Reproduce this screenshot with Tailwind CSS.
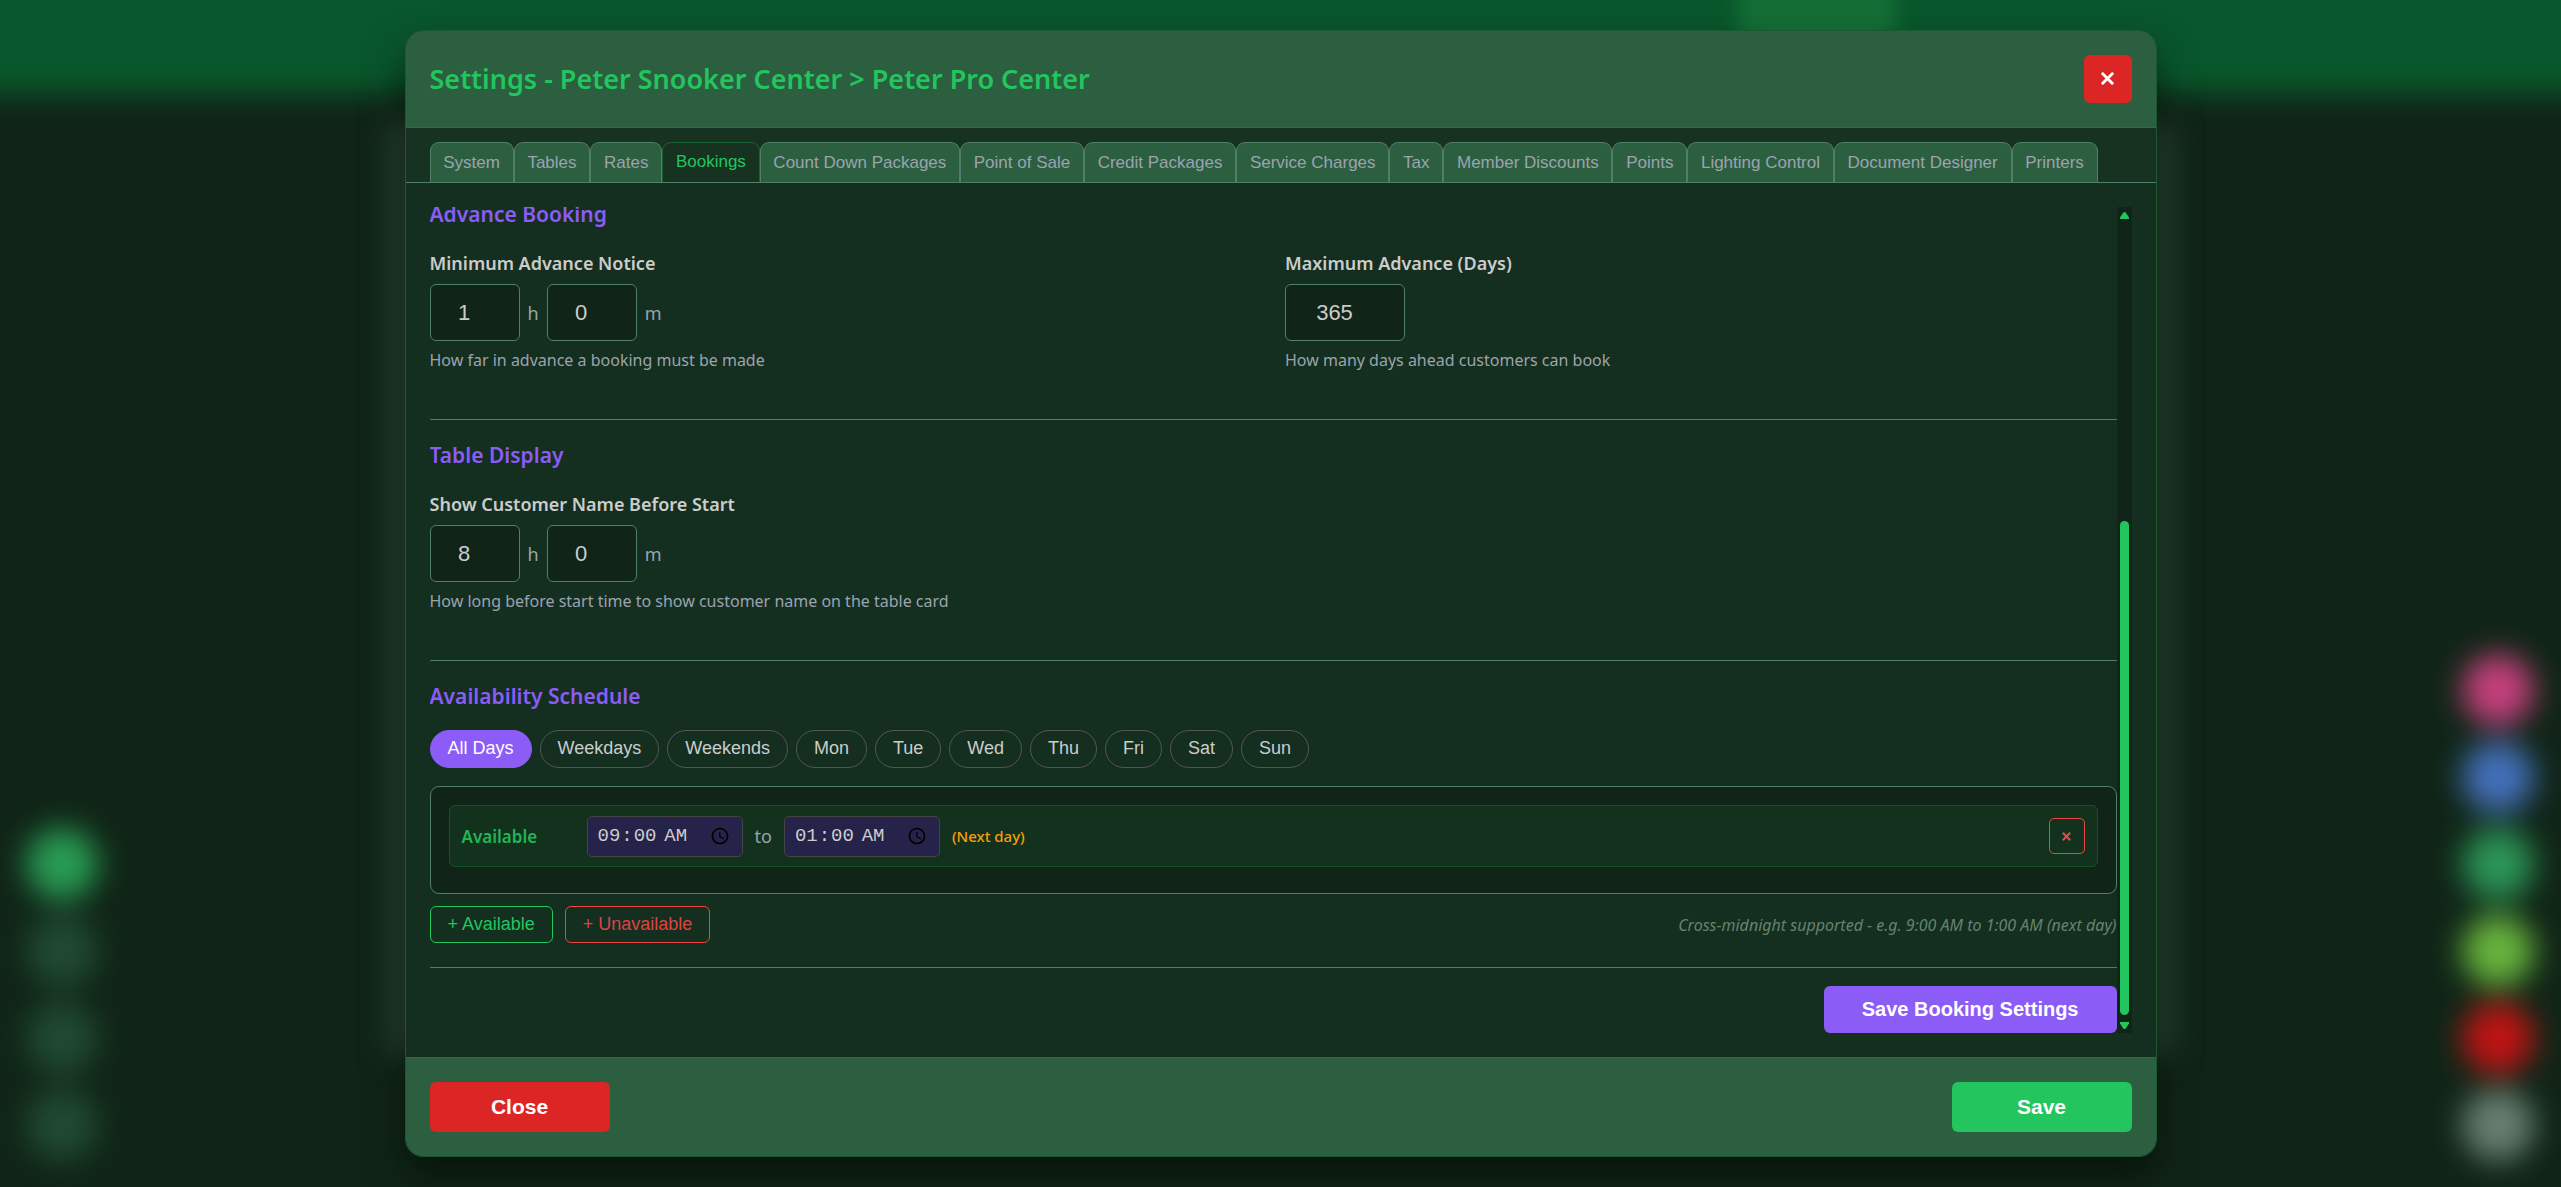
<!DOCTYPE html>
<html lang="en">
<head>
	<meta charset="UTF-8" />
	<meta name="viewport" content="width=device-width, initial-scale=1.0" />
	<title>Settings - Peter Snooker Center</title>
	<script src="https://cdn.jsdelivr.net/npm/@tailwindcss/browser@4"></script>
</head>
<body class="relative h-screen overflow-hidden bg-[#102517] font-['Segoe_UI','Noto_Sans',sans-serif] text-[#cccccc]">

	<!-- Blurred page behind the dialog -->
	<div class="absolute inset-0 overflow-hidden" aria-hidden="true">
		<div class="absolute -top-10 -inset-x-10 h-[134px] bg-[#09572c] blur-[14px]"></div>
		<div class="absolute top-[120px] bottom-[130px] inset-x-[388px] bg-[#244231] blur-[14px]"></div>
		<div class="absolute -top-8 left-[1738px] w-[158px] h-[120px] bg-[#146f36] blur-[10px]"></div>
		<div class="absolute left-[26px] bottom-[26px] flex flex-col gap-[15px] blur-[15px]">
			<div class="size-[72px] rounded-full bg-[#289c55]"></div>
			<div class="size-[72px] rounded-full bg-[#204a32]"></div>
			<div class="size-[72px] rounded-full bg-[#204a32]"></div>
			<div class="size-[72px] rounded-full bg-[#204a32]"></div>
		</div>
		<div class="absolute right-[27px] bottom-[26px] flex flex-col gap-[15px] blur-[15px]">
			<div class="size-[72px] rounded-full bg-[#c4407c]"></div>
			<div class="size-[72px] rounded-full bg-[#4470ba]"></div>
			<div class="size-[72px] rounded-full bg-[#2c9557]"></div>
			<div class="size-[72px] rounded-full bg-[#68b43e]"></div>
			<div class="size-[72px] rounded-full bg-[#bf1414]"></div>
			<div class="size-[72px] rounded-full bg-[#677f72]"></div>
		</div>
	</div>

	<div class="relative h-full flex items-center justify-center">
		<div role="dialog" aria-labelledby="dialogTitle" class="w-full max-w-[1752px] h-[95vh] flex flex-col rounded-[18px] overflow-hidden border border-[#1a5a33] bg-[#142f1f] shadow-[0_20px_40px_rgba(0,0,0,0.5)]">

			<header class="shrink-0 flex items-center justify-between p-6 bg-[#2c5f40] border-b border-[#2a6f47]">
				<h1 id="dialogTitle" class="text-[27px] leading-9 font-semibold text-[#22c55e]">Settings - Peter Snooker Center &gt; Peter Pro Center</h1>
				<button type="button" aria-label="Close dialog" class="size-12 flex items-center justify-center rounded-md bg-[#dc2626] text-white">
					<svg class="size-[13px]" viewBox="0 0 12 12" fill="none" stroke="currentColor" stroke-width="2.6"><path d="M0.8 0.8 11.2 11.2M11.2 0.8 0.8 11.2" /></svg>
				</button>
			</header>

			<nav class="shrink-0 px-6 pt-[14px] bg-[#183222] border-b border-[#4f8065]">
				<div class="max-w-[1668px] flex font-['Liberation_Sans',sans-serif] text-[17px] leading-6 text-[#9ca3af]">
					<button type="button" class="grow px-3 pt-2 pb-[7px] border border-b-0 border-[#4f8065] rounded-t-[9px] bg-[#2c5f40]">System</button>
					<button type="button" class="grow px-3 pt-2 pb-[7px] border border-b-0 border-[#4f8065] rounded-t-[9px] bg-[#2c5f40]">Tables</button>
					<button type="button" class="grow px-3 pt-2 pb-[7px] border border-b-0 border-[#4f8065] rounded-t-[9px] bg-[#2c5f40]">Rates</button>
					<button type="button" class="grow px-3 pt-[7px] pb-2 border border-b-0 border-[#1a6336] rounded-t-[9px] bg-[#183222] text-[#22c55e]">Bookings</button>
					<button type="button" class="grow px-3 pt-2 pb-[7px] border border-b-0 border-[#4f8065] rounded-t-[9px] bg-[#2c5f40]">Count Down Packages</button>
					<button type="button" class="grow px-3 pt-2 pb-[7px] border border-b-0 border-[#4f8065] rounded-t-[9px] bg-[#2c5f40]">Point of Sale</button>
					<button type="button" class="grow px-3 pt-2 pb-[7px] border border-b-0 border-[#4f8065] rounded-t-[9px] bg-[#2c5f40]">Credit Packages</button>
					<button type="button" class="grow px-3 pt-2 pb-[7px] border border-b-0 border-[#4f8065] rounded-t-[9px] bg-[#2c5f40]">Service Charges</button>
					<button type="button" class="grow px-3 pt-2 pb-[7px] border border-b-0 border-[#4f8065] rounded-t-[9px] bg-[#2c5f40]">Tax</button>
					<button type="button" class="grow px-3 pt-2 pb-[7px] border border-b-0 border-[#4f8065] rounded-t-[9px] bg-[#2c5f40]">Member Discounts</button>
					<button type="button" class="grow px-3 pt-2 pb-[7px] border border-b-0 border-[#4f8065] rounded-t-[9px] bg-[#2c5f40]">Points</button>
					<button type="button" class="grow px-3 pt-2 pb-[7px] border border-b-0 border-[#4f8065] rounded-t-[9px] bg-[#2c5f40]">Lighting Control</button>
					<button type="button" class="grow px-3 pt-2 pb-[7px] border border-b-0 border-[#4f8065] rounded-t-[9px] bg-[#2c5f40]">Document Designer</button>
					<button type="button" class="grow px-3 pt-2 pb-[7px] border border-b-0 border-[#4f8065] rounded-t-[9px] bg-[#2c5f40]">Printers</button>
				</div>
			</nav>

			<main class="flex-1 min-h-0 flex p-6">
				<!-- Scrolled to the end, so the content sits on the bottom edge -->
				<div class="flex-1 min-w-0 flex flex-col justify-end overflow-hidden">

					<section class="shrink-0 pb-[47px] border-b border-[#4f8065]">
						<h2 class="text-[21px] leading-7 font-semibold text-[#8b5cf6]">Advance Booking</h2>
						<div class="mt-[23px] grid grid-cols-2 gap-6">
							<div>
								<label for="noticeHours" class="block text-lg leading-6 font-semibold">Minimum Advance Notice</label>
								<div class="mt-[9px] flex items-center gap-2 text-lg text-[#9ca3af]">
									<input id="noticeHours" type="number" value="1" class="w-[90px] h-[57px] pl-3 pr-[18px] rounded-md border border-[#4f8065] bg-[#102517] text-center font-['Liberation_Sans',sans-serif] text-[22px] text-[#cccccc]" />
									<span>h</span>
									<input type="number" value="0" aria-label="Minutes of notice" class="w-[90px] h-[57px] pl-3 pr-[18px] rounded-md border border-[#4f8065] bg-[#102517] text-center font-['Liberation_Sans',sans-serif] text-[22px] text-[#cccccc]" />
									<span>m</span>
								</div>
								<p class="mt-[7px] text-base text-[#9ca3af]">How far in advance a booking must be made</p>
							</div>
							<div>
								<label for="maxDays" class="block text-lg leading-6 font-semibold">Maximum Advance (Days)</label>
								<input id="maxDays" type="number" value="365" class="mt-[9px] block w-[120px] h-[57px] pl-3 pr-[18px] rounded-md border border-[#4f8065] bg-[#102517] text-center font-['Liberation_Sans',sans-serif] text-[22px] text-[#cccccc]" />
								<p class="mt-[7px] text-base text-[#9ca3af]">How many days ahead customers can book</p>
							</div>
						</div>
					</section>

					<section class="shrink-0 pt-[21px] pb-[47px] border-b border-[#4f8065]">
						<h2 class="text-[21px] leading-7 font-semibold text-[#8b5cf6]">Table Display</h2>
						<label for="showHours" class="mt-[23px] block text-lg leading-6 font-semibold">Show Customer Name Before Start</label>
						<div class="mt-[9px] flex items-center gap-2 text-lg text-[#9ca3af]">
							<input id="showHours" type="number" value="8" class="w-[90px] h-[57px] pl-3 pr-[18px] rounded-md border border-[#4f8065] bg-[#102517] text-center font-['Liberation_Sans',sans-serif] text-[22px] text-[#cccccc]" />
							<span>h</span>
							<input type="number" value="0" aria-label="Minutes before start" class="w-[90px] h-[57px] pl-3 pr-[18px] rounded-md border border-[#4f8065] bg-[#102517] text-center font-['Liberation_Sans',sans-serif] text-[22px] text-[#cccccc]" />
							<span>m</span>
						</div>
						<p class="mt-[7px] text-base text-[#9ca3af]">How long before start time to show customer name on the table card</p>
					</section>

					<section class="shrink-0 pt-[21px] pb-6 border-b border-[#4f8065]">
						<h2 class="text-[21px] leading-7 font-semibold text-[#8b5cf6]">Availability Schedule</h2>

						<div class="mt-5 flex gap-2 font-['Liberation_Sans',sans-serif] text-lg leading-5 font-medium">
							<button type="button" class="h-[38px] px-[17px] pb-0.5 rounded-full border border-[#8b5cf6] bg-[#8b5cf6] text-white">All Days</button>
							<button type="button" class="h-[38px] px-[17px] pb-0.5 rounded-full border border-[#555555]">Weekdays</button>
							<button type="button" class="h-[38px] px-[17px] pb-0.5 rounded-full border border-[#555555]">Weekends</button>
							<button type="button" class="h-[38px] px-[17px] pb-0.5 rounded-full border border-[#555555]">Mon</button>
							<button type="button" class="h-[38px] px-[17px] pb-0.5 rounded-full border border-[#555555]">Tue</button>
							<button type="button" class="h-[38px] px-[17px] pb-0.5 rounded-full border border-[#555555]">Wed</button>
							<button type="button" class="h-[38px] px-[17px] pb-0.5 rounded-full border border-[#555555]">Thu</button>
							<button type="button" class="h-[38px] px-[17px] pb-0.5 rounded-full border border-[#555555]">Fri</button>
							<button type="button" class="h-[38px] px-[17px] pb-0.5 rounded-full border border-[#555555]">Sat</button>
							<button type="button" class="h-[38px] px-[17px] pb-0.5 rounded-full border border-[#555555]">Sun</button>
						</div>

						<div class="mt-[18px] px-[18px] pt-[18px] pb-[26px] rounded-[9px] border border-[#4f8065] bg-[#102517]">
							<div class="h-[62px] flex items-center gap-3 px-3 rounded-md border border-[#17502c] bg-[#13321d]">
								<span class="w-[113px] text-[17px] font-semibold text-[#22b557]">Available</span>
								<input type="time" value="09:00" aria-label="Opens at" class="w-[156px] h-[41px] px-[9px] rounded-[5px] border border-[#444444] bg-[#25234a] font-['Liberation_Mono',monospace] text-[19px]" />
								<span class="text-lg text-[#9ca3af]">to</span>
								<input type="time" value="01:00" aria-label="Closes at" class="w-[156px] h-[41px] px-[9px] rounded-[5px] border border-[#444444] bg-[#25234a] font-['Liberation_Mono',monospace] text-[19px]" />
								<span class="text-[15px] font-medium text-[#f59e0b]">(Next day)</span>
								<button type="button" aria-label="Remove time slot" class="ml-auto size-9 flex items-center justify-center rounded-[5px] border border-[#ef4444] text-[#ef4444]">
									<svg class="size-[9px]" viewBox="0 0 8 8" fill="none" stroke="currentColor" stroke-width="1.9"><path d="M0.7 0.7 7.3 7.3M7.3 0.7 0.7 7.3" /></svg>
								</button>
							</div>
						</div>

						<div class="mt-3 flex items-center gap-3">
							<button type="button" class="h-[37px] px-[17px] pb-0.5 rounded-md border border-[#22c55e] font-['Liberation_Sans',sans-serif] text-lg leading-5 text-[#22c55e]">+ Available</button>
							<button type="button" class="h-[37px] px-[17px] pb-0.5 rounded-md border border-[#ef4444] font-['Liberation_Sans',sans-serif] text-lg leading-5 text-[#dc4444]">+ Unavailable</button>
							<p class="ml-auto text-base italic text-[#67826f]">Cross-midnight supported - e.g. 9:00 AM to 1:00 AM (next day)</p>
						</div>
					</section>

					<div class="shrink-0 pt-[18px] flex justify-end">
						<button type="button" class="h-[47px] px-[38px] pb-0.5 rounded-md bg-[#8b5cf6] font-['Liberation_Sans',sans-serif] text-xl font-bold text-white">Save Booking Settings</button>
					</div>
				</div>

				<!-- Scrollbar -->
				<div class="shrink-0 w-[15px] flex flex-col items-center bg-[#102517]" aria-hidden="true">
					<svg class="mt-[5px] w-[9px] h-[7px] fill-[#22c55e]" viewBox="0 0 9 7"><path d="M3.3 0.6Q4.5 -0.6 5.7 0.6L9 5.5V7H0V5.5Z" /></svg>
					<div class="grow-[302]"></div>
					<div class="w-[9px] grow-[494] rounded-full bg-[#22c55e]"></div>
					<svg class="mt-[7px] mb-1 w-[9px] h-[7px] fill-[#22c55e]" viewBox="0 0 9 7"><path d="M0 0H9V1.5L5.7 6.4Q4.5 7.6 3.3 6.4L0 1.5Z" /></svg>
				</div>
			</main>

			<footer class="shrink-0 flex justify-between p-6 bg-[#2c5f40] border-t border-[#2a6f47] font-['Liberation_Sans',sans-serif] text-[21px] font-bold text-white">
				<button type="button" class="w-[180px] h-[50px] pb-0.5 rounded-md bg-[#dc2626]">Close</button>
				<button type="button" class="w-[180px] h-[50px] pb-0.5 rounded-md bg-[#22c55e]">Save</button>
			</footer>
		</div>
	</div>
</body>
</html>
